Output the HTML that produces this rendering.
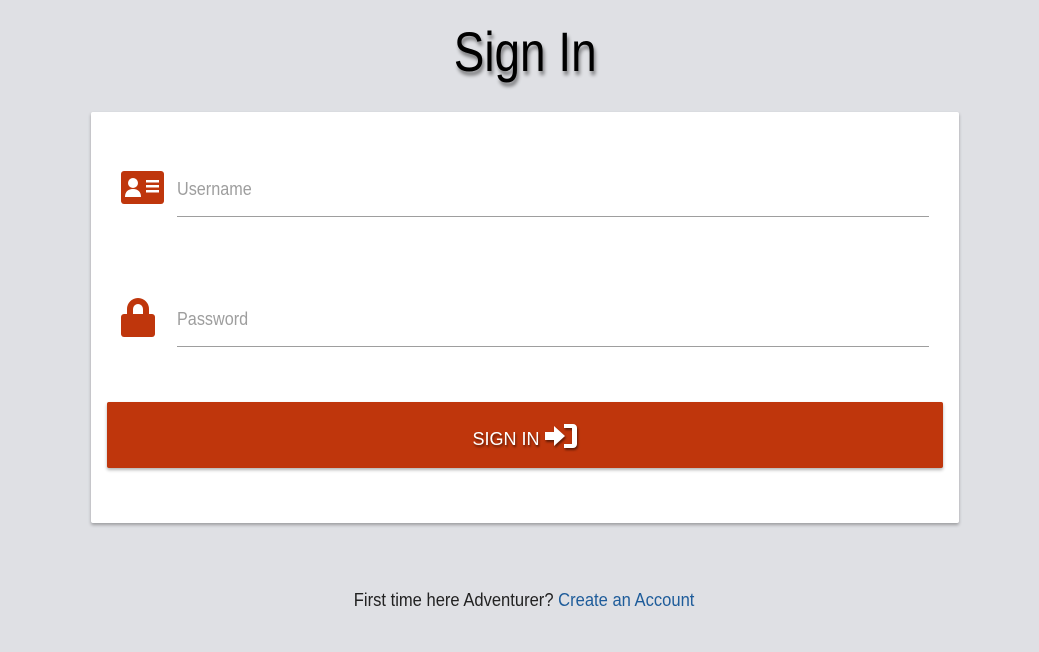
<!DOCTYPE html>
<html><head><style>
body{margin:0;width:1039px;height:652px;background:#dfe0e4;font-family:"Liberation Sans",sans-serif;position:relative;overflow:hidden}
.t{position:absolute;left:0;right:0;top:20px;text-align:center;font-size:56px;line-height:64px;color:#000;text-shadow:2px 4px 4px rgba(0,0,0,.45)}
.t span{display:inline-block;transform:scaleX(.82);margin-left:12px}
.card{position:absolute;left:91px;top:112px;width:868px;height:411px;background:#fff;border-radius:2px;box-shadow:0 2px 3px rgba(0,0,0,.3)}
.line{position:absolute;left:177px;width:752px;height:1px;background:#9e9e9e}
.ph{position:absolute;left:177px;font-size:18px;color:#9e9e9e;transform:scaleX(.9);transform-origin:left}
.btn{position:absolute;left:107px;top:402px;width:836px;height:66px;background:#bf360c;border-radius:2px;box-shadow:0 2px 3px rgba(0,0,0,.3);color:#fff;text-align:center;line-height:74px;font-size:18px;text-shadow:1px 2px 2px rgba(0,0,0,.5)}
.f{position:absolute;left:0;right:0;top:590px;text-align:center;font-size:18px;color:#222}
.f span{display:inline-block;transform:scaleX(.92);margin-left:10px}
.f a{color:#1e5c9a;text-decoration:none}
</style></head><body>
<div class="t"><span>Sign In</span></div>
<div class="card"></div>
<svg style="position:absolute;left:121px;top:171px" width="43" height="33" viewBox="0 0 43 33"><rect width="43" height="33" rx="3" fill="#bf360c"/><circle cx="12" cy="12" r="5" fill="#fff"/><path d="M4 26c0-5 3-8 8-8s8 3 8 8z" fill="#fff"/><rect x="25" y="9" width="13" height="2.5" fill="#fff"/><rect x="25" y="14" width="13" height="2.5" fill="#fff"/><rect x="25" y="19" width="13" height="2.5" fill="#fff"/></svg>
<svg style="position:absolute;left:121px;top:298px" width="34" height="39" viewBox="0 0 34 39"><path d="M6 18v-7a11 11 0 0122 0v7h-6v-7a5 5 0 00-10 0v7z" fill="#bf360c"/><rect x="0" y="16" width="34" height="23" rx="3" fill="#bf360c"/></svg>
<div class="ph" style="top:179px">Username</div>
<div class="line" style="top:216px"></div>
<div class="ph" style="top:309px">Password</div>
<div class="line" style="top:346px"></div>
<div class="btn">SIGN IN <svg width="33" height="26" viewBox="0 0 33 26" style="vertical-align:-4px;filter:drop-shadow(1px 2px 1px rgba(0,0,0,.5))"><path d="M0 9h9V3l11 10-11 10v-6H0z" fill="#fff"/><path d="M19 1h9a4 4 0 014 4v16a4 4 0 01-4 4h-9v-4h8V5h-8z" fill="#fff"/></svg></div>
<div class="f"><span>First time here Adventurer? <a>Create an Account</a></span></div>
</body></html>
